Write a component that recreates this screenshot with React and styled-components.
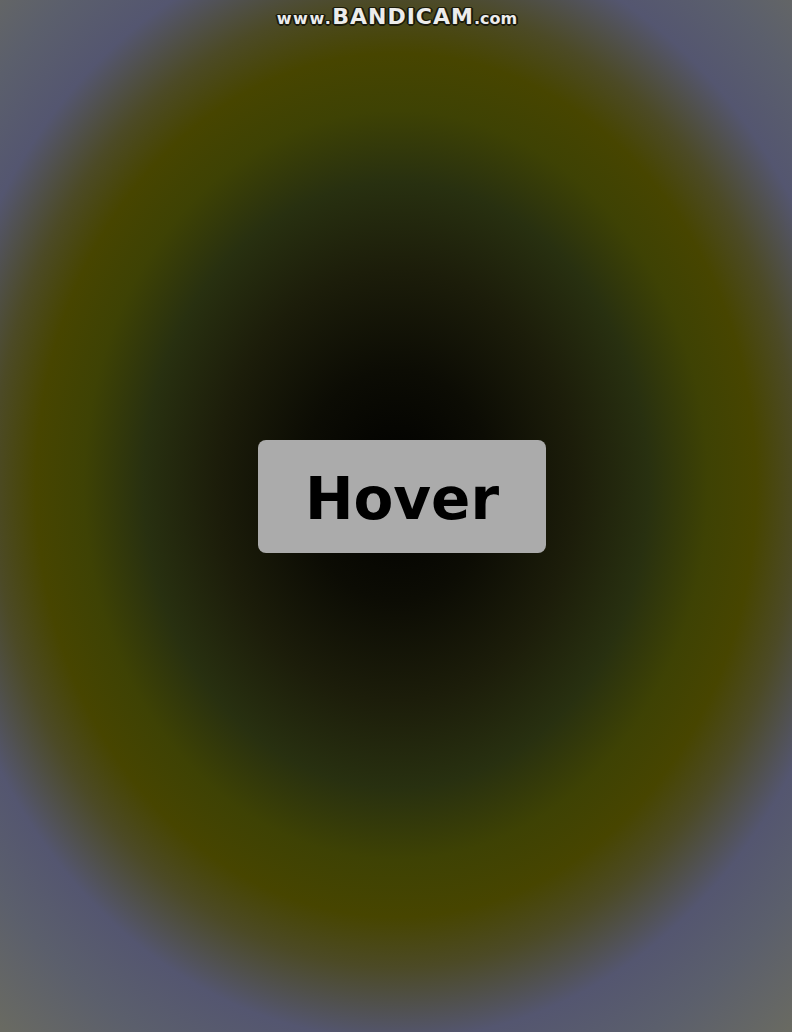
import React from "react";
import styled, { createGlobalStyle } from "styled-components";

const GlobalStyle = createGlobalStyle`
  html, body {
    margin: 0;
    padding: 0;
    height: 100%;
  }
  body {
    font-family: "DejaVu Sans", sans-serif;
    background: #000;
  }
`

const Page = styled.div`
  position: relative;
  height: 1032px;
  display: flex;
  align-items: center;
  justify-content: center;
  padding: 0 0 40px 12px;
  box-sizing: border-box;
  background: radial-gradient(
    ellipse 600px 720px at 50% 47%,
    #000000 0%,
    #0c0c04 16%,
    #1c1d0a 30%,
    #283010 42%,
    #3e4204 52%,
    #474500 60%,
    #4c4a26 67%,
    #545670 77%,
    #5b5f6c 87%,
    #696a62 100%
  );
`

const Watermark = styled.div`
  position: absolute;
  top: 4px;
  left: 0;
  right: 0;
  padding-left: 2px;
  text-align: center;
  font-family: "DejaVu Sans", sans-serif;
  font-weight: bold;
  color: #ececec;
  text-shadow: 1px 1px 0 #1c1c0c, -1px -1px 0 #1c1c0c, 1px -1px 0 #1c1c0c,
    -1px 1px 0 #1c1c0c, 0 2px 0 #1c1c0c, 2px 0 0 #1c1c0c, -2px 0 0 #1c1c0c;
`

const Small = styled.span`
  font-size: 16px;
  letter-spacing: ${(p) => p.$spacing || 0}px;
`

const Big = styled.span`
  font-size: 22px;
  letter-spacing: 1px;
`

const HoverButton = styled.button`
  width: 288px;
  height: 113px;
  border: none;
  border-radius: 8px;
  background-color: #ababab;
  color: #000;
  font-family: "DejaVu Sans", sans-serif;
  font-weight: bold;
  font-size: 58px;
  cursor: pointer;
  padding: 6px 0 0;
`

const App = () => {
  return (
    <>
      <GlobalStyle />
      <Page>
        <Watermark>
          <Small $spacing={1.5}>www.</Small>
          <Big>BANDICAM</Big>
          <Small>.com</Small>
        </Watermark>
        <HoverButton>Hover</HoverButton>
      </Page>
    </>
  );
};

export default App;
